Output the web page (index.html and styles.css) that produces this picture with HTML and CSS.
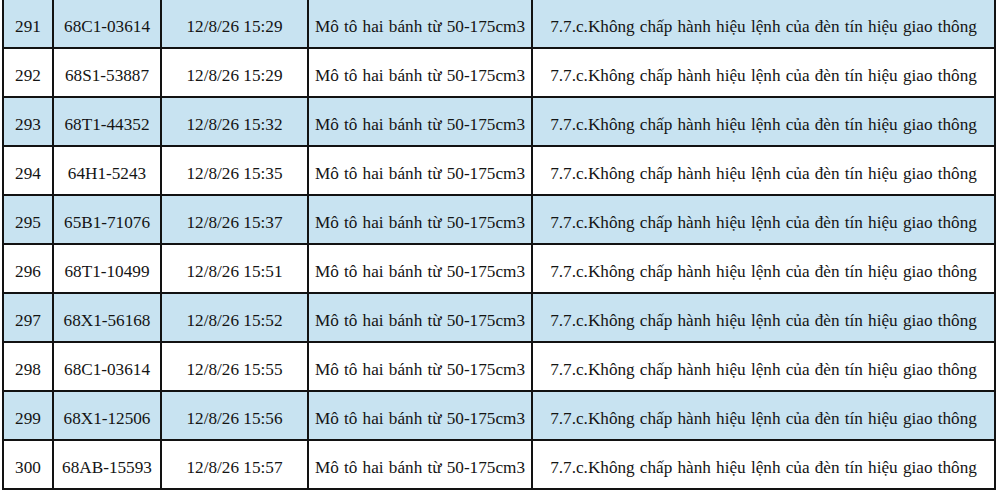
FILE: index.html
```html
<!DOCTYPE html>
<html lang="vi">
<head>
<meta charset="utf-8">
<title>Danh sách vi phạm</title>
<link rel="stylesheet" href="styles.css">
</head>
<body>
<div class="sheet">
<table class="grid">
<colgroup>
<col class="c-no"><col class="c-plate"><col class="c-time"><col class="c-type"><col class="c-err">
</colgroup>
<tbody>
<tr class="alt"><td>291</td><td>68C1-03614</td><td>12/8/26 15:29</td><td class="wide">Mô tô hai bánh từ 50-175cm3</td><td class="wide">7.7.c.Không chấp hành hiệu lệnh của đèn tín hiệu giao thông</td></tr>
<tr><td>292</td><td>68S1-53887</td><td>12/8/26 15:29</td><td class="wide">Mô tô hai bánh từ 50-175cm3</td><td class="wide">7.7.c.Không chấp hành hiệu lệnh của đèn tín hiệu giao thông</td></tr>
<tr class="alt"><td>293</td><td>68T1-44352</td><td>12/8/26 15:32</td><td class="wide">Mô tô hai bánh từ 50-175cm3</td><td class="wide">7.7.c.Không chấp hành hiệu lệnh của đèn tín hiệu giao thông</td></tr>
<tr><td>294</td><td>64H1-5243</td><td>12/8/26 15:35</td><td class="wide">Mô tô hai bánh từ 50-175cm3</td><td class="wide">7.7.c.Không chấp hành hiệu lệnh của đèn tín hiệu giao thông</td></tr>
<tr class="alt"><td>295</td><td>65B1-71076</td><td>12/8/26 15:37</td><td class="wide">Mô tô hai bánh từ 50-175cm3</td><td class="wide">7.7.c.Không chấp hành hiệu lệnh của đèn tín hiệu giao thông</td></tr>
<tr><td>296</td><td>68T1-10499</td><td>12/8/26 15:51</td><td class="wide">Mô tô hai bánh từ 50-175cm3</td><td class="wide">7.7.c.Không chấp hành hiệu lệnh của đèn tín hiệu giao thông</td></tr>
<tr class="alt"><td>297</td><td>68X1-56168</td><td>12/8/26 15:52</td><td class="wide">Mô tô hai bánh từ 50-175cm3</td><td class="wide">7.7.c.Không chấp hành hiệu lệnh của đèn tín hiệu giao thông</td></tr>
<tr><td>298</td><td>68C1-03614</td><td>12/8/26 15:55</td><td class="wide">Mô tô hai bánh từ 50-175cm3</td><td class="wide">7.7.c.Không chấp hành hiệu lệnh của đèn tín hiệu giao thông</td></tr>
<tr class="alt"><td>299</td><td>68X1-12506</td><td>12/8/26 15:56</td><td class="wide">Mô tô hai bánh từ 50-175cm3</td><td class="wide">7.7.c.Không chấp hành hiệu lệnh của đèn tín hiệu giao thông</td></tr>
<tr><td>300</td><td>68AB-15593</td><td>12/8/26 15:57</td><td class="wide">Mô tô hai bánh từ 50-175cm3</td><td class="wide">7.7.c.Không chấp hành hiệu lệnh của đèn tín hiệu giao thông</td></tr>
</tbody>
</table>
</div>
</body>
</html>
```
FILE: styles.css
```css
html, body {
  margin: 0;
  padding: 0;
  background: #ffffff;
}
body {
  font-family: "Liberation Serif", "Times New Roman", serif;
  color: #141414;
}
.sheet {
  padding-left: 2px;
  margin-top: -2px;
  overflow: hidden;
}
.grid {
  border-collapse: collapse;
  table-layout: fixed;
  width: 992px;
  font-size: 17.2px;
}
.c-no { width: 50px; }
.c-plate { width: 108px; }
.c-time { width: 147px; }
.c-type { width: 224px; }
.c-err { width: 463px; }
.grid td {
  border: 2px solid #121212;
  height: 47px;
  padding: 7px 0 0 0;
  box-sizing: border-box;
  text-align: center;
  vertical-align: middle;
  white-space: nowrap;
  line-height: 20px;
}
.grid td.wide {
  word-spacing: 0.9px;
}
.grid tr { height: 49px; }
.grid tr.alt td {
  background: #c8e3f1;
}
```
